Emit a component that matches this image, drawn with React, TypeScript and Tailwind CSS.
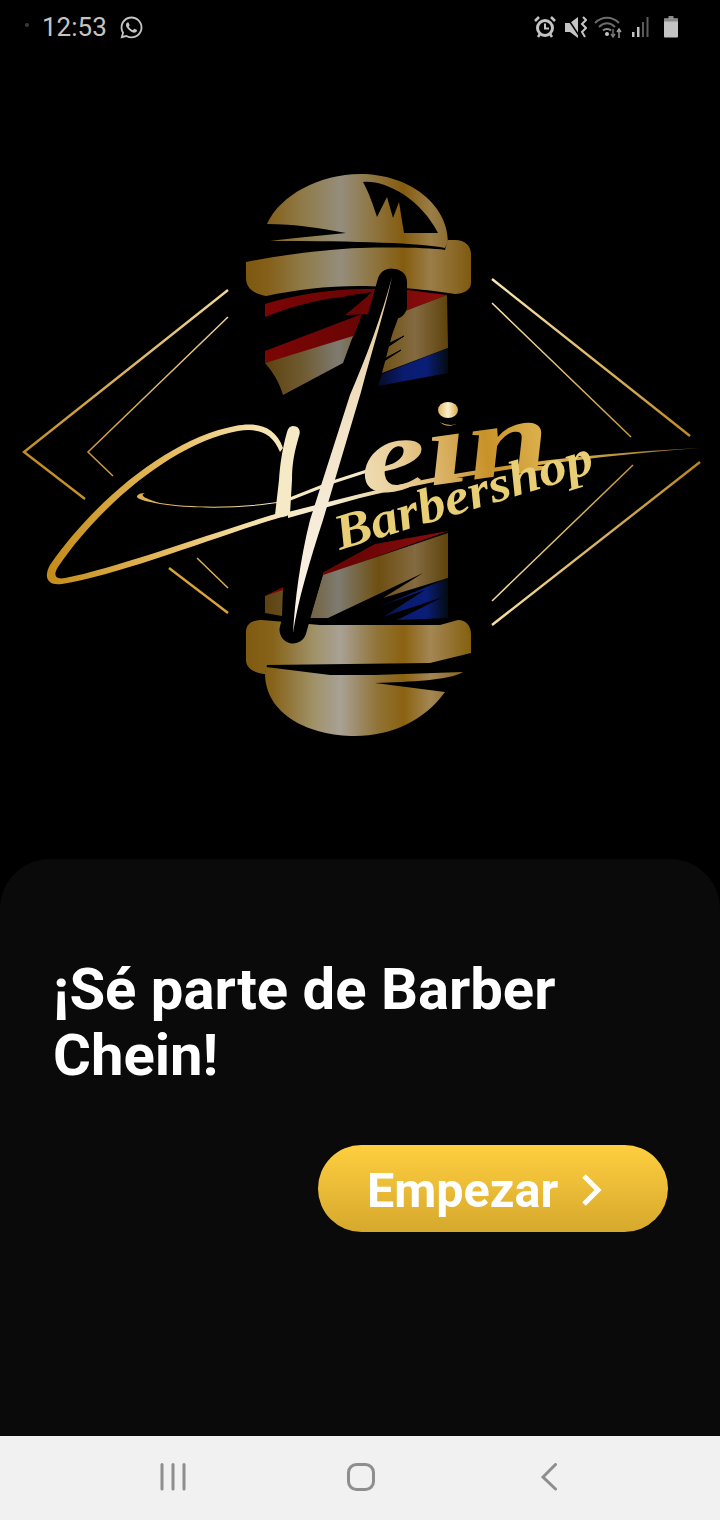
import React from "react";
import { FaWhatsapp } from "react-icons/fa";

function Logo() {
  return (
    <svg width="720" height="803" viewBox="0 56 720 803" className="block">
      <defs>
        <linearGradient id="metal" gradientUnits="userSpaceOnUse" x1="246" y1="0" x2="471" y2="0">
          <stop offset="0" stopColor="#7d5810" />
          <stop offset="0.1" stopColor="#84601a" />
          <stop offset="0.25" stopColor="#8f7a48" />
          <stop offset="0.42" stopColor="#958d7c" />
          <stop offset="0.55" stopColor="#8f7846" />
          <stop offset="0.7" stopColor="#845c0e" />
          <stop offset="0.82" stopColor="#9a7d48" />
          <stop offset="1" stopColor="#7f5a10" />
        </linearGradient>
        <linearGradient id="metal2" gradientUnits="userSpaceOnUse" x1="246" y1="0" x2="471" y2="0">
          <stop offset="0" stopColor="#805a10" />
          <stop offset="0.12" stopColor="#87631a" />
          <stop offset="0.3" stopColor="#a09268" />
          <stop offset="0.42" stopColor="#a8a195" />
          <stop offset="0.58" stopColor="#917438" />
          <stop offset="0.7" stopColor="#8a6210" />
          <stop offset="0.82" stopColor="#a38653" />
          <stop offset="1" stopColor="#85600f" />
        </linearGradient>
        <linearGradient id="band" gradientUnits="userSpaceOnUse" x1="265" y1="0" x2="448" y2="0">
          <stop offset="0" stopColor="#5e4210" />
          <stop offset="0.2" stopColor="#6f5a30" />
          <stop offset="0.4" stopColor="#7e7b70" />
          <stop offset="0.62" stopColor="#6e4f12" />
          <stop offset="0.82" stopColor="#836a40" />
          <stop offset="1" stopColor="#5f430c" />
        </linearGradient>
        <linearGradient id="red" gradientUnits="userSpaceOnUse" x1="265" y1="0" x2="448" y2="0">
          <stop offset="0" stopColor="#7c0505" />
          <stop offset="0.5" stopColor="#6a0505" />
          <stop offset="1" stopColor="#8f0d0d" />
        </linearGradient>
        <linearGradient id="blue" gradientUnits="userSpaceOnUse" x1="375" y1="0" x2="448" y2="0">
          <stop offset="0" stopColor="#050a20" />
          <stop offset="0.4" stopColor="#0a1c70" />
          <stop offset="0.7" stopColor="#0a1e78" />
          <stop offset="1" stopColor="#030a10" />
        </linearGradient>
        <linearGradient id="gold" gradientUnits="userSpaceOnUse" x1="48" y1="0" x2="700" y2="0">
          <stop offset="0" stopColor="#c48c18" />
          <stop offset="0.2" stopColor="#e8bf66" />
          <stop offset="0.32" stopColor="#f6e2ac" />
          <stop offset="0.42" stopColor="#f8eed6" />
          <stop offset="0.55" stopColor="#e8cc94" />
          <stop offset="0.68" stopColor="#c8922a" />
          <stop offset="0.78" stopColor="#deb552" />
          <stop offset="1" stopColor="#8a6a20" />
        </linearGradient>
        <linearGradient id="lineL" gradientUnits="userSpaceOnUse" x1="24" y1="450" x2="228" y2="290">
          <stop offset="0" stopColor="#c48c24" />
          <stop offset="1" stopColor="#f0d698" />
        </linearGradient>
        <linearGradient id="lineR" gradientUnits="userSpaceOnUse" x1="492" y1="280" x2="690" y2="436">
          <stop offset="0" stopColor="#fbe9b4" />
          <stop offset="1" stopColor="#c08a20" />
        </linearGradient>
        <linearGradient id="lineR2" gradientUnits="userSpaceOnUse" x1="492" y1="625" x2="700" y2="462">
          <stop offset="0" stopColor="#f8e2a0" />
          <stop offset="1" stopColor="#b98420" />
        </linearGradient>
        <linearGradient id="needle" gradientUnits="userSpaceOnUse" x1="0" y1="277" x2="0" y2="633">
          <stop offset="0" stopColor="#e4c896" />
          <stop offset="0.4" stopColor="#f2e2c6" />
          <stop offset="1" stopColor="#fbf6ee" />
        </linearGradient>
        <linearGradient id="dot" gradientUnits="userSpaceOnUse" x1="438" y1="0" x2="458" y2="0">
          <stop offset="0" stopColor="#e0b860" />
          <stop offset="0.5" stopColor="#fbf0d0" />
          <stop offset="1" stopColor="#d8a848" />
        </linearGradient>
      </defs>

      {/* diamond lines */}
      <g fill="none" strokeLinejoin="miter">
        <path d="M228 290 L24 452 L85 499" stroke="url(#lineL)" strokeWidth="2.4" />
        <path d="M228 317 L88 452 L113 476" stroke="url(#lineL)" strokeWidth="1.5" />
        <path d="M169 568 L228 613" stroke="#d9a438" strokeWidth="2.4" />
        <path d="M197 558 L228 588" stroke="#d9ae58" strokeWidth="1.5" />
        <path d="M492 279 L690 436" stroke="url(#lineR)" strokeWidth="2.4" />
        <path d="M492 303 L631 437" stroke="url(#lineR)" strokeWidth="1.5" />
        <path d="M492 625 L700 462" stroke="url(#lineR2)" strokeWidth="2.4" />
        <path d="M492 601 L633 465" stroke="url(#lineR2)" strokeWidth="1.5" />
      </g>

      {/* top dome */}
      <path
        d="M267 224 C280 195 320 174 360 174 C410 174 448 205 448 242 L445 248 C420 243 360 241 270 241 C290 238 320 236 346 233 C320 228 295 224 267 224 Z"
        fill="url(#metal)"
      />
      <path
        d="M363 182 C385 180 420 198 438 233 L404 233 L399 202 L393 218 L387 197 L377 217 C373 205 370 195 363 182 Z"
        fill="#000"
      />
      {/* collar */}
      <path
        d="M246 262 C280 255 330 249 360 248 C400 247 430 248 445 250 L448 240 L455 240 C465 240 471 246 471 254 L471 283 C471 290 463 294 455 294 C430 290 390 286 360 286 C325 286 295 290 266 296 C254 294 246 288 246 278 Z"
        fill="url(#metal)"
      />

      {/* upper stripes */}
      <path d="M265 304 C300 293 340 288 372 289 L400 289 L447 295 L400 313 L345 315 L368 296 L342 297 C315 300 290 307 265 317 Z" fill="url(#red)" />
      <path d="M332 310 L346 296 L372 292 L345 315 Z" fill="#000" />
      <path d="M265 351 L362 314 L353 338 L265 363 Z" fill="url(#red)" />
      <path d="M265 363 L353 336 L343 363 L283 395 C279 382 273 372 265 363 Z" fill="url(#band)" />
      <path d="M400 313 L447 295 L448 348 L382 373 L392 335 Z" fill="url(#band)" />
      <path d="M388 344 L404 336 L389 346 Z M386 358 L401 350 L384 361 Z" fill="#000" stroke="#000" />
      <path d="M382 374 L448 348 L448 373 L378 386 Z" fill="url(#blue)" />

      {/* lower stripes */}
      <path d="M322 573 L375 544 L448 531 L323 576 Z" fill="url(#red)" />
      <path d="M323 575 L448 533 L448 578 L383 598 L423 573 L328 618 L310 618 Z" fill="url(#band)" />
      <path d="M265 596 L283 588 L282 616 L265 613 Z" fill="url(#band)" />
      <path d="M265 596 L283 587 L283 590 L268 595 Z" fill="#7c0505" />
      <path d="M448 578 L448 618 L397 620 L443 597 L383 617 L425 590 L378 607 L395 600 Z" fill="url(#blue)" />

      {/* lower collar */}
      <path
        d="M246 632 C246 624 252 620 262 620 L320 625 L440 625 L458 620 C466 620 471 626 471 634 L471 653 L430 663 L267 665 L265 674 C254 673 246 668 246 660 Z"
        fill="url(#metal2)"
      />
      {/* lower dome */}
      <path
        d="M266 667 L330 675 L375 675 L463 672 C450 680 410 682 375 683 L445 692 C425 720 392 736 355 736 C310 736 265 715 265 673 Z"
        fill="url(#metal2)"
      />

      {/* needle backing */}
      <path d="M391 282 L293 630" stroke="#000" strokeWidth="27" strokeLinecap="round" fill="none" />
      <path d="M394 282 L394 306" stroke="#000" strokeWidth="26" strokeLinecap="round" fill="none" />

      {/* script swoosh */}
      <path
        d="M283 448 C275 425 255 422 235 426 C170 438 95 500 50 565 C43 578 48 586 62 584 C120 575 220 535 282 517 L282 512 C220 530 120 567 65 578 C55 580 53 575 58 567 C100 505 175 442 238 431 C258 428 272 432 280 452 Z"
        fill="url(#gold)"
      />
      <path
        d="M293 426 C299 426 301 431 299 436 C295 450 292 462 292 480 L290 514 Q283 520 275 515 L279 480 C280 465 282 450 287 432 C288 428 290 426 293 426 Z"
        fill="#f6e9c6"
      />
      <path
        d="M277 503 C240 509 190 509 160 504 C145 501 136 499 137 496 C138 494 141 493 145 493 C140 495 142 498 160 503 C190 508 240 508 277 502 Z"
        fill="url(#gold)"
      />
      <path d="M290 499 L333 482 L367 471" stroke="#f6e9c6" strokeWidth="3" fill="none" />
      <path d="M288 512 L360 494 C450 471 560 455 700 448 C570 458 450 476 360 498 L288 518 Z" fill="url(#gold)" />

      <text
        x="364"
        y="495"
        transform="rotate(-8 364 495)"
        textLength="192"
        lengthAdjust="spacingAndGlyphs"
        fontFamily="'Liberation Serif', serif"
        fontStyle="italic"
        fontWeight="700"
        fontSize="104"
        fill="url(#gold)"
      >
        ein
      </text>
      <ellipse cx="451" cy="416" rx="15" ry="9" fill="#000" />
      <ellipse cx="448" cy="410" rx="10" ry="8" fill="url(#dot)" />
      <text
        x="340"
        y="550"
        transform="rotate(-17 340 550)"
        textLength="268"
        lengthAdjust="spacingAndGlyphs"
        fontFamily="'Liberation Serif', serif"
        fontStyle="italic"
        fontWeight="700"
        fontSize="50"
        fill="#e8ce74"
      >
        Barbershop
      </text>

      {/* needle */}
      <path
        d="M392 277 C382 315 366 358 350 395 L310 520 C300 560 295 600 293 633 C298 600 310 560 323 520 L361 392 C372 350 385 310 392 277 Z"
        fill="url(#needle)"
      />
    </svg>
  );
}

function StatusBar() {
  return (
    <div className="h-[56px] flex items-start justify-between pt-[15px] pr-[42px] pl-[25px] shrink-0">
      <div className="flex items-center h-[24px]">
        <div className="w-[4px] h-[4px] rounded-full bg-[#3a3a3a] -mt-[4px]" />
        <span className="ml-[13px] text-[26px] leading-[24px] text-[#c4c4c4] font-['Roboto',sans-serif]">12:53</span>
        <FaWhatsapp className="ml-[12px] text-[#c4c4c4]" size={25} />
      </div>
      <div className="flex items-center h-[24px]">
        <svg width="22" height="24" viewBox="0 0 22 24" fill="none">
          <circle cx="11" cy="13" r="7.5" stroke="#c4c4c4" strokeWidth="3" />
          <path d="M11 8.5 V13.5 H15" stroke="#c4c4c4" strokeWidth="2" />
          <path d="M1 6 L5 2 M21 6 L17 2 M4 22 L6 19 M18 22 L16 19" stroke="#c4c4c4" strokeWidth="2.5" />
        </svg>
        <svg className="ml-[9px]" width="22" height="24" viewBox="0 0 22 24" fill="none">
          <path d="M0 8 H5 L13 2 V23 L5 17 H0 Z" fill="#c4c4c4" />
          <path d="M1 1 L15 22" stroke="#000" strokeWidth="1.5" />
          <path d="M18 2 L21 5 L17 9 L21 13 L17 17 L20 22" stroke="#c4c4c4" strokeWidth="2" />
        </svg>
        <svg className="ml-[7px]" width="29" height="24" viewBox="0 0 29 24" fill="none">
          <path d="M1 8 C8 1 18 1 25 8" stroke="#6b6b6b" strokeWidth="2" />
          <path d="M5 12 C10 7 16 7 21 12" stroke="#6b6b6b" strokeWidth="2" />
          <path d="M9 15.5 C11 13.5 15 13.5 17 15.5" stroke="#8a8a8a" strokeWidth="2" />
          <circle cx="13" cy="19" r="2" fill="#c4c4c4" />
          <path d="M19 14 V21 M17 19 L19 22 L21 19" stroke="#7a7a7a" strokeWidth="1.4" />
          <path d="M25 23 V15 M23 17 L25 14 L27 17" stroke="#a0a0a0" strokeWidth="1.4" />
        </svg>
        <svg className="ml-[8px]" width="18" height="24" viewBox="0 0 18 24" fill="none">
          <rect x="1" y="17" width="2.5" height="5" fill="#c4c4c4" />
          <rect x="6" y="12" width="2.5" height="10" fill="#c4c4c4" />
          <rect x="11" y="7" width="2" height="15" fill="#5c5c5c" />
          <rect x="15.5" y="2" width="2" height="20" fill="#5c5c5c" />
        </svg>
        <svg className="ml-[15px]" width="14" height="24" viewBox="0 0 14 24" fill="none">
          <rect x="4.5" y="1" width="5" height="3" fill="#8a8a8a" />
          <rect x="0" y="3.5" width="14" height="19" rx="1" fill="#c4c4c4" />
          <rect x="0" y="3.5" width="14" height="3" fill="#8a8a8a" />
        </svg>
      </div>
    </div>
  );
}

export default function App() {
  return (
    <div className="w-[720px] h-[1520px] bg-black flex flex-col overflow-hidden font-['Roboto',sans-serif]">
      <StatusBar />
      <div className="h-[803px] shrink-0">
        <Logo />
      </div>
      <div className="h-[577px] shrink-0 bg-[#0a0a0a] rounded-t-[50px] pt-[97px] pl-[53px] pr-[52px] flex flex-col">
        <h1 className="text-[58px] leading-[66px] font-bold text-white w-[600px]">¡Sé parte de Barber Chein!</h1>
        <button className="self-end mt-[57px] w-[350px] h-[87px] rounded-full bg-gradient-to-b from-[#ffcf40] to-[#d6a82c] flex items-center pl-[49px]">
          <span className="text-[48.5px] leading-none font-bold text-white mt-[6px]">Empezar</span>
          <svg className="ml-[22px] mt-[2px]" width="22" height="34" viewBox="0 0 22 34" fill="none">
            <path d="M4 3 L18 17 L4 31" stroke="#fff" strokeWidth="5" />
          </svg>
        </button>
      </div>
      <div className="h-[84px] shrink-0 bg-[#f1f1f1] flex items-center pl-[160px] pb-[2px]">
        <svg width="28" height="28" viewBox="0 0 28 28" fill="none">
          <path d="M2 1.5 V26 M13 1.5 V26 M24 1.5 V26" stroke="#8e8e8e" strokeWidth="3" strokeLinecap="round" />
        </svg>
        <svg className="ml-[158px]" width="30" height="30" viewBox="0 0 30 30" fill="none">
          <rect x="2.5" y="2.5" width="25" height="25" rx="8" stroke="#8e8e8e" strokeWidth="3" />
        </svg>
        <svg className="ml-[165px]" width="16" height="28" viewBox="0 0 16 28" fill="none">
          <path d="M14.5 1.5 L2 14 L14.5 26" stroke="#8e8e8e" strokeWidth="3" strokeLinecap="round" />
        </svg>
      </div>
    </div>
  );
}
